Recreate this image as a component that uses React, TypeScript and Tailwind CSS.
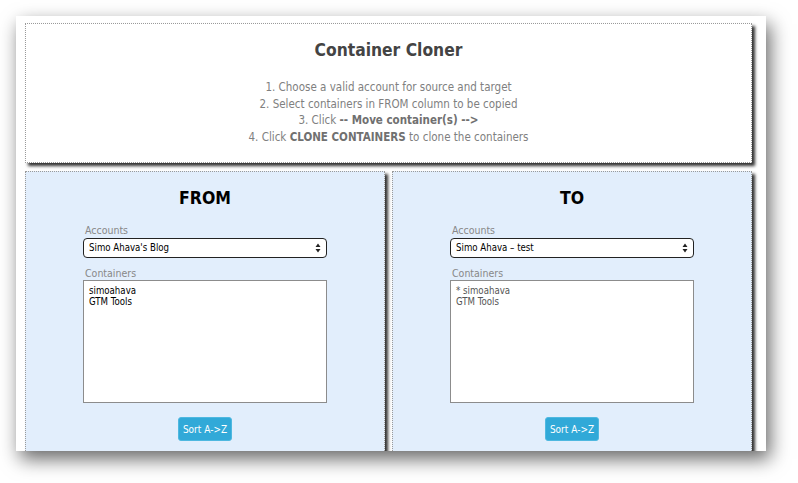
const FONT = "font-['DejaVu_Sans_Condensed','DejaVu_Sans',sans-serif] font-stretch-condensed";

const columns = [
  {
    id: "from",
    title: "FROM",
    account: "Simo Ahava's Blog",
    containers: ["simoahava", "GTM Tools"],
    itemColor: "text-black",
  },
  {
    id: "to",
    title: "TO",
    account: "Simo Ahava \u2013 test",
    containers: ["* simoahava", "GTM Tools"],
    itemColor: "text-[#555]",
  },
];

function Column({ col }: { col: (typeof columns)[number] }) {
  return (
    <div className="flex h-[300px] w-[360px] flex-col items-center border border-dotted border-[#9a9a9a] bg-[#e2eefc] shadow-[3px_3px_3px_#333]">
      <h2 className="mt-[15px] text-[17.5px] leading-[22px] font-bold text-black">{col.title}</h2>
      <div className="mt-[14px] w-[244px]">
        <label className="block pl-[2px] text-[10.5px] leading-[15px] text-[#888]">Accounts</label>
        <div className="relative">
          <select
            defaultValue={col.account}
            className="block h-[20px] w-full appearance-none rounded-[4px] border border-[#222] bg-white pl-[5px] font-['DejaVu_Sans',sans-serif] text-[9.6px] leading-[18px] text-black"
          >
            <option>{col.account}</option>
          </select>
          <svg
            className="pointer-events-none absolute top-[5px] right-[6px]"
            width="6"
            height="10"
            viewBox="0 0 6 10"
          >
            <path d="M3 0.5 L5.5 4 L0.5 4 Z M3 9.5 L5.5 6 L0.5 6 Z" fill="#222" />
          </svg>
        </div>
        <label className="mt-[8px] block pl-[2px] text-[10.5px] leading-[14px] text-[#888]">Containers</label>
        <div className="h-[123px] w-full border border-[#8c8c8c] bg-white px-[5px] pt-[4px] font-['DejaVu_Sans',sans-serif] text-[9.6px] leading-[11px]">
          {col.containers.map((c) => (
            <div key={c} className={col.itemColor}>
              {c}
            </div>
          ))}
        </div>
      </div>
      <button
        type="button"
        className="mt-[14px] h-[24px] w-[54px] rounded-[3px] border border-[#4fb8e0] bg-[#31a9d8] text-[10px] text-white"
      >
        Sort A-&gt;Z
      </button>
    </div>
  );
}

export default function App() {
  return (
    <div className={`min-h-screen bg-white pt-4 pl-4 ${FONT}`}>
      <div className="h-[435px] w-[750px] overflow-hidden bg-white pt-[7px] pl-[9px] shadow-[4px_8px_18px_rgba(0,0,0,0.6)]">
        <header className="h-[140px] w-[727px] border border-dotted border-[#9a9a9a] bg-white text-center shadow-[3px_3px_3px_#333]">
          <h1 className="pt-[15px] text-[17.3px] leading-[22px] font-bold text-[#444]">Container Cloner</h1>
          <div className="mt-[18px] text-[11.5px] leading-[16.7px] text-[#808080]">
            <p>1. Choose a valid account for source and target</p>
            <p>2. Select containers in FROM column to be copied</p>
            <p>
              3. Click <b className="text-[#707070]">-- Move container(s) --&gt;</b>
            </p>
            <p>
              4. Click <b className="text-[#707070]">CLONE CONTAINERS</b> to clone the containers
            </p>
          </div>
        </header>
        <div className="mt-[8px] flex gap-[7px]">
          {columns.map((c) => (
            <Column key={c.id} col={c} />
          ))}
        </div>
      </div>
    </div>
  );
}
